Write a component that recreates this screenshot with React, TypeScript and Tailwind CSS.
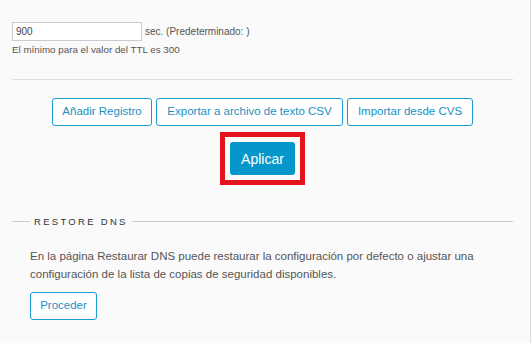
import React from "react";

const outlineBtn =
  "h-[28px] border border-[#1a9bcd] rounded-[3px] bg-white text-[11.5px] text-[#1a8fc2] leading-none whitespace-nowrap";

// DNS settings panel: TTL field, record actions and the restore section
const App: React.FC = () => {
  return (
    <div
      className="w-[532px] h-[343px] bg-[#fafafa] text-[#555] overflow-hidden"
      style={{ fontFamily: '"Liberation Sans", Arial, sans-serif' }}
    >
      <div className="w-[531px] h-full border-r border-[#dcdcdc]">
        {/* TTL */}
        <div className="pt-[22px] pl-3">
          <div className="flex items-center">
            <input
              readOnly
              value="900"
              className="w-[130px] h-[19px] border border-[#ccc] bg-white px-[3px] text-[10px] text-[#444] outline-none"
            />
            <span className="ml-[3px] text-[10px] text-[#555]">sec. (Predeterminado: )</span>
          </div>
          <p className="mt-[2px] text-[9.8px] text-[#555] leading-[13px]">
            El mínimo para el valor del TTL es 300
          </p>
        </div>

        <div className="ml-3 mt-[23px] w-[501px] border-t border-[#dedede]" />

        {/* actions */}
        <div className="ml-3 w-[501px] mt-[18px] flex flex-col items-center">
          <div className="flex gap-[4px]">
            <button className={outlineBtn + " w-[100px]"}>Añadir Registro</button>
            <button className={outlineBtn + " w-[187px]"}>Exportar a archivo de texto CSV</button>
            <button className={outlineBtn + " w-[126px]"}>Importar desde CVS</button>
          </div>
          <div className="mt-[6px] border-[5px] border-[#e4141c] p-[5px]">
            <button className="w-[65px] h-[33px] rounded-[3px] bg-[#0597cc] text-white text-[14px] leading-none">
              Aplicar
            </button>
          </div>
        </div>

        {/* restore dns */}
        <div className="ml-3 w-[501px] mt-[32px] flex items-center">
          <div className="w-[18px] border-t border-[#ccc]" />
          <span className="mx-[4px] text-[9.5px] tracking-[2.3px] text-[#333] leading-none">
            RESTORE DNS
          </span>
          <div className="flex-1 border-t border-[#ccc]" />
        </div>
        <div className="pl-[30px] pt-[20px]">
          <p className="text-[11.5px] leading-[18px] text-[#555] w-[470px]">
            En la página Restaurar DNS puede restaurar la configuración por defecto o ajustar una
            configuración de la lista de copias de seguridad disponibles.
          </p>
          <button className={outlineBtn + " mt-[9px] w-[67px] h-[27px]"}>Proceder</button>
        </div>
      </div>
    </div>
  );
};

export default App;
